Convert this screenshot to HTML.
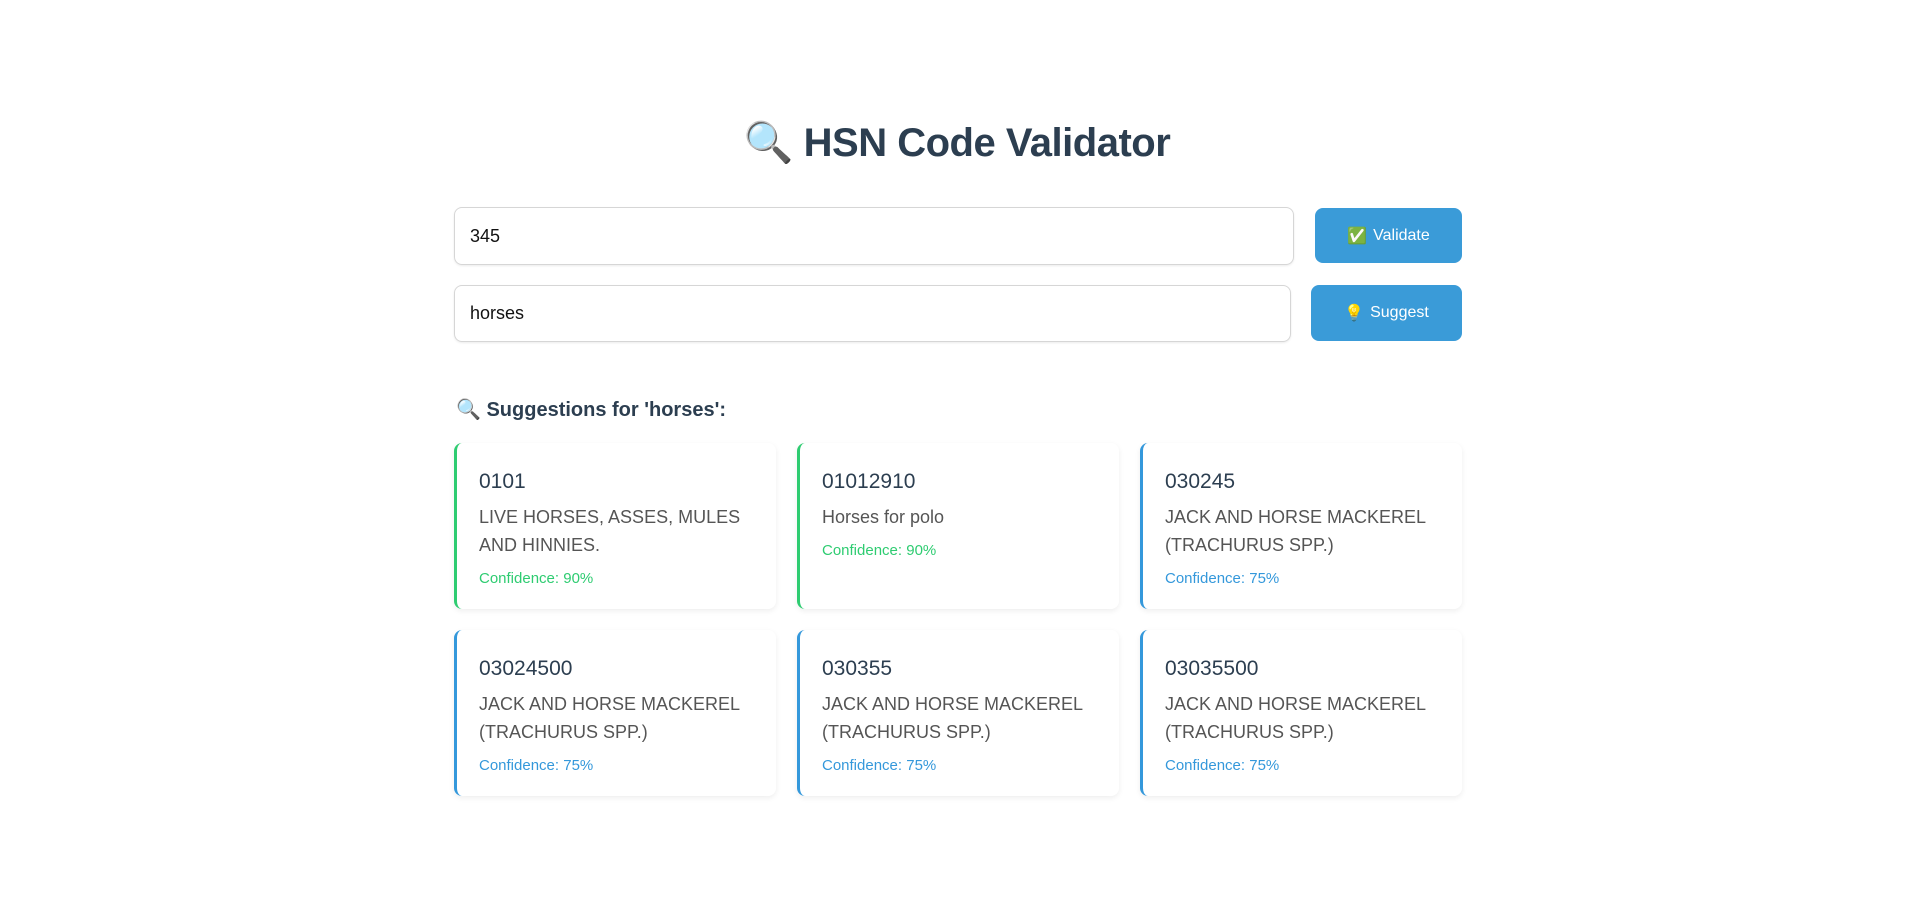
<!DOCTYPE html>
<html><head><meta charset="utf-8"><style>
*{box-sizing:border-box;margin:0;padding:0}
body{width:1914px;height:922px;background:#fff;font-family:"Liberation Sans","DejaVu Sans",sans-serif;position:relative;overflow:hidden}
h1{position:absolute;top:118px;left:0;width:1914px;text-align:center;font-size:40px;font-weight:bold;color:#2c3e50;font-family:"Liberation Sans",sans-serif;letter-spacing:-0.5px;line-height:50px}
.inp{position:absolute;border:1px solid #d6d6d6;border-radius:8px;font-size:18px;color:#111;padding-left:15px;display:flex;align-items:center;box-shadow:0 1px 2px rgba(0,0,0,.08)}
.btn{position:absolute;background:#3a9bd8;color:#fff;border-radius:8px;font-size:16px;display:flex;align-items:center;justify-content:center;gap:6px}
.h2{position:absolute;left:456px;top:397px;font-size:20px;font-weight:bold;color:#2c3e50;font-family:"Liberation Sans",sans-serif}
.card{position:absolute;width:322px;height:166px;border-radius:8px;box-shadow:0 2px 6px rgba(0,0,0,.07);border-left:3px solid #3498db;padding:25px 0 0 22px;font-family:"Liberation Sans",sans-serif}
.g{border-left-color:#2ecc71}
.code{font-size:21px;color:#2c3e50;line-height:28px}
.desc{font-size:18px;color:#555;line-height:28px;margin-top:7px;width:270px}
.conf{font-size:15px;color:#3498db;margin-top:11px}
.g .conf{color:#2ecc71}
</style></head><body>
<h1>🔍 HSN Code Validator</h1>
<div class="inp" style="left:454px;top:207px;width:840px;height:58px">345</div>
<div class="btn" style="left:1315px;top:208px;width:147px;height:55px"><span style="color:#4c4">✅</span>Validate</div>
<div class="inp" style="left:454px;top:285px;width:837px;height:57px">horses</div>
<div class="btn" style="left:1311px;top:285px;width:151px;height:56px"><span>💡</span>Suggest</div>
<div class="h2">🔍 Suggestions for 'horses':</div>
<div class="card g" style="left:454px;top:443px"><div class="code">0101</div><div class="desc">LIVE HORSES, ASSES, MULES AND HINNIES.</div><div class="conf">Confidence: 90%</div></div>
<div class="card g" style="left:797px;top:443px"><div class="code">01012910</div><div class="desc">Horses for polo</div><div class="conf">Confidence: 90%</div></div>
<div class="card" style="left:1140px;top:443px"><div class="code">030245</div><div class="desc">JACK AND HORSE MACKEREL (TRACHURUS SPP.)</div><div class="conf">Confidence: 75%</div></div>
<div class="card" style="left:454px;top:630px"><div class="code">03024500</div><div class="desc">JACK AND HORSE MACKEREL (TRACHURUS SPP.)</div><div class="conf">Confidence: 75%</div></div>
<div class="card" style="left:797px;top:630px"><div class="code">030355</div><div class="desc">JACK AND HORSE MACKEREL (TRACHURUS SPP.)</div><div class="conf">Confidence: 75%</div></div>
<div class="card" style="left:1140px;top:630px"><div class="code">03035500</div><div class="desc">JACK AND HORSE MACKEREL (TRACHURUS SPP.)</div><div class="conf">Confidence: 75%</div></div>
</body></html>
